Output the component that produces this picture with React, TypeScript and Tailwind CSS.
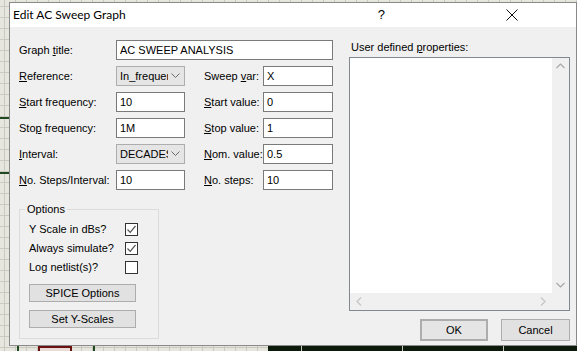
import React from 'react';

const font = { fontFamily: '"Liberation Sans", Arial, sans-serif' };

// label with one underlined access-key letter
const Label = ({ text, u, className = '' }: { text: string; u: number; className?: string }) => (
  <span className={`whitespace-nowrap ${className}`}>
    {text.slice(0, u)}
    <span className="underline underline-offset-[1px]">{text[u]}</span>
    {text.slice(u + 1)}
  </span>
);

const TextBox = ({ value, className = '' }: { value: string; className?: string }) => (
  <div className={`h-[20px] bg-white border border-[#7a7a7a] pl-[3px] flex items-center text-[11px] text-black ${className}`}>
    {value}
  </div>
);

const Combo = ({ value }: { value: string }) => (
  <div className="h-[20px] w-[69px] bg-[#e5e5e5] border border-[#adadad] pl-[3px] pr-[4px] flex items-center justify-between text-[11px] text-black">
    <span className="overflow-hidden whitespace-nowrap w-[48px] text-clip">{value}</span>
    <svg width="9" height="6" viewBox="0 0 9 6" className="shrink-0">
      <path d="M0.5 0.5 L4.5 4.5 L8.5 0.5" fill="none" stroke="#6a6a6a" strokeWidth="1" />
    </svg>
  </div>
);

const Check = ({ checked }: { checked: boolean }) => (
  <div className="w-[13px] h-[13px] border border-[#333] bg-white flex items-center justify-center">
    {checked && (
      <svg width="11" height="11" viewBox="0 0 11 11">
        <path d="M1.5 5.5 L4.2 8.3 L9.5 2" fill="none" stroke="#555" strokeWidth="1.2" />
      </svg>
    )}
  </div>
);

const Btn = ({ children, className = '' }: { children: React.ReactNode; className?: string }) => (
  <div className={`bg-[#e1e1e1] border border-[#adadad] flex items-center justify-center text-[11px] text-black ${className}`}>
    {children}
  </div>
);

export default function App() {
  return (
    <div
      className="w-[577px] h-[351px] relative overflow-hidden bg-[#e6e6de] bg-[linear-gradient(to_right,#c9c9c1_1px,transparent_1px),linear-gradient(to_bottom,#c9c9c1_1px,transparent_1px)] bg-[size:11px_11px] bg-[position:4px_6px]"
      style={font}
    >
      {/* schematic bits behind the dialog */}
      <div className="absolute left-[268px] top-[330px] w-[309px] h-[21px] bg-[#0b1a0b] flex">
        <div className="ml-[33px] w-px h-full bg-[#c9c9c1]" />
        <div className="ml-[100px] w-px h-full bg-[#c9c9c1]" />
        <div className="ml-[100px] w-px h-full bg-[#c9c9c1]" />
      </div>
      <div className="absolute left-[17px] top-[330px] w-[2px] h-[21px] bg-[#1f4a1f]" />
      <div className="absolute left-[93px] top-[330px] w-[2px] h-[21px] bg-[#1f4a1f]" />
      <div className="absolute left-[38px] top-[346px] w-[34px] h-[10px] border-2 border-[#6b1010] bg-[#e9dcd6]" />
      <div className="absolute left-0 top-[117px] w-[10px] h-[2px] bg-[#1f4a1f]" />
      <div className="absolute left-0 top-[172px] w-[10px] h-[2px] bg-[#1f4a1f]" />

      <div className="relative ml-[9px] mt-[2px] w-[568px] h-[344px] border border-[#8a8a8a] bg-[#f0f0f0] flex flex-col">
        {/* title bar */}
        <div className="h-[24px] bg-white flex items-center shrink-0">
          <span className="ml-[3px] text-[12px] text-black" style={{ fontFamily: 'Lato, "Liberation Sans", sans-serif' }}>
            Edit AC Sweep Graph
          </span>
          <span className="ml-auto mr-[121px] text-[13px] text-black">?</span>
          <svg width="12" height="12" viewBox="0 0 12 12" className="mr-[58px]">
            <path d="M0.5 0.5 L11.5 11.5 M11.5 0.5 L0.5 11.5" stroke="#111" strokeWidth="1" />
          </svg>
        </div>

        <div className="flex flex-1 text-[11px] text-black">
          {/* left side */}
          <div className="w-[330px] pl-[9px] pt-[13px] flex flex-col">
            <div className="grid grid-cols-[97px_69px_19px_59px_70px] gap-y-[6px] items-center">
              <Label text="Graph title:" u={6} />
              <TextBox value="AC SWEEP ANALYSIS" className="col-span-4" />

              <Label text="Reference:" u={0} />
              <Combo value="In_frequer" />
              <div />
              <Label text="Sweep var:" u={6} />
              <TextBox value="X" />

              <Label text="Start frequency:" u={0} />
              <TextBox value="10" />
              <div />
              <Label text="Start value:" u={0} />
              <TextBox value="0" />

              <Label text="Stop frequency:" u={3} />
              <TextBox value="1M" />
              <div />
              <Label text="Stop value:" u={0} />
              <TextBox value="1" />

              <Label text="Interval:" u={0} />
              <Combo value="DECADES" />
              <div />
              <Label text="Nom. value:" u={0} />
              <TextBox value="0.5" />

              <Label text="No. Steps/Interval:" u={0} />
              <TextBox value="10" />
              <div />
              <Label text="No. steps:" u={0} />
              <TextBox value="10" />
            </div>

            {/* options group */}
            <fieldset className="mt-[12px] w-[140px] h-[137px] border border-[#dcdcdc] pl-[9px] pr-[20px]">
              <legend className="-ml-[4px] px-[2px] leading-[14px]">Options</legend>
              <div className="flex flex-col gap-[6px] mt-[7px]">
                <div className="flex items-center justify-between h-[13px]">
                  <span>Y Scale in dBs?</span>
                  <Check checked />
                </div>
                <div className="flex items-center justify-between h-[13px]">
                  <span>Always simulate?</span>
                  <Check checked />
                </div>
                <div className="flex items-center justify-between h-[13px]">
                  <span>Log netlist(s)?</span>
                  <Check checked={false} />
                </div>
              </div>
              <Btn className="mt-[10px] w-[107px] h-[18px]">SPICE Options</Btn>
              <Btn className="mt-[8px] w-[107px] h-[18px]">Set Y-Scales</Btn>
            </fieldset>
          </div>

          {/* right side */}
          <div className="pl-[9px] pt-[14px] flex flex-col">
            <Label text="User defined properties:" u={13} className="ml-[2px] leading-[13px]" />
            <div className="mt-[3px] w-[221px] h-[254px] border border-[#828790] bg-white flex flex-col">
              <div className="flex flex-1">
                <div className="flex-1" />
                <div className="w-[17px] bg-[#f0f0f0] flex flex-col items-center justify-between py-[5px]">
                  <svg width="9" height="6" viewBox="0 0 9 6">
                    <path d="M0.5 5 L4.5 1 L8.5 5" fill="none" stroke="#a6a6a6" strokeWidth="1.2" />
                  </svg>
                  <svg width="9" height="6" viewBox="0 0 9 6">
                    <path d="M0.5 1 L4.5 5 L8.5 1" fill="none" stroke="#a6a6a6" strokeWidth="1.2" />
                  </svg>
                </div>
              </div>
              <div className="h-[17px] flex">
                <div className="flex-1 bg-[#f0f0f0] flex items-center justify-between px-[6px]">
                  <svg width="6" height="9" viewBox="0 0 6 9">
                    <path d="M5 0.5 L1 4.5 L5 8.5" fill="none" stroke="#c4c4c4" strokeWidth="1.2" />
                  </svg>
                  <svg width="6" height="9" viewBox="0 0 6 9">
                    <path d="M1 0.5 L5 4.5 L1 8.5" fill="none" stroke="#c4c4c4" strokeWidth="1.2" />
                  </svg>
                </div>
                <div className="w-[17px] bg-[#f0f0f0]" />
              </div>
            </div>
            <div className="flex justify-end gap-[13px] mt-[8px]">
              <Btn className="w-[68px] h-[22px] border-2 border-[#2a78c6] bg-[#e5e5e5]">OK</Btn>
              <Btn className="w-[69px] h-[22px]">Cancel</Btn>
            </div>
          </div>
        </div>
      </div>
    </div>
  );
}
